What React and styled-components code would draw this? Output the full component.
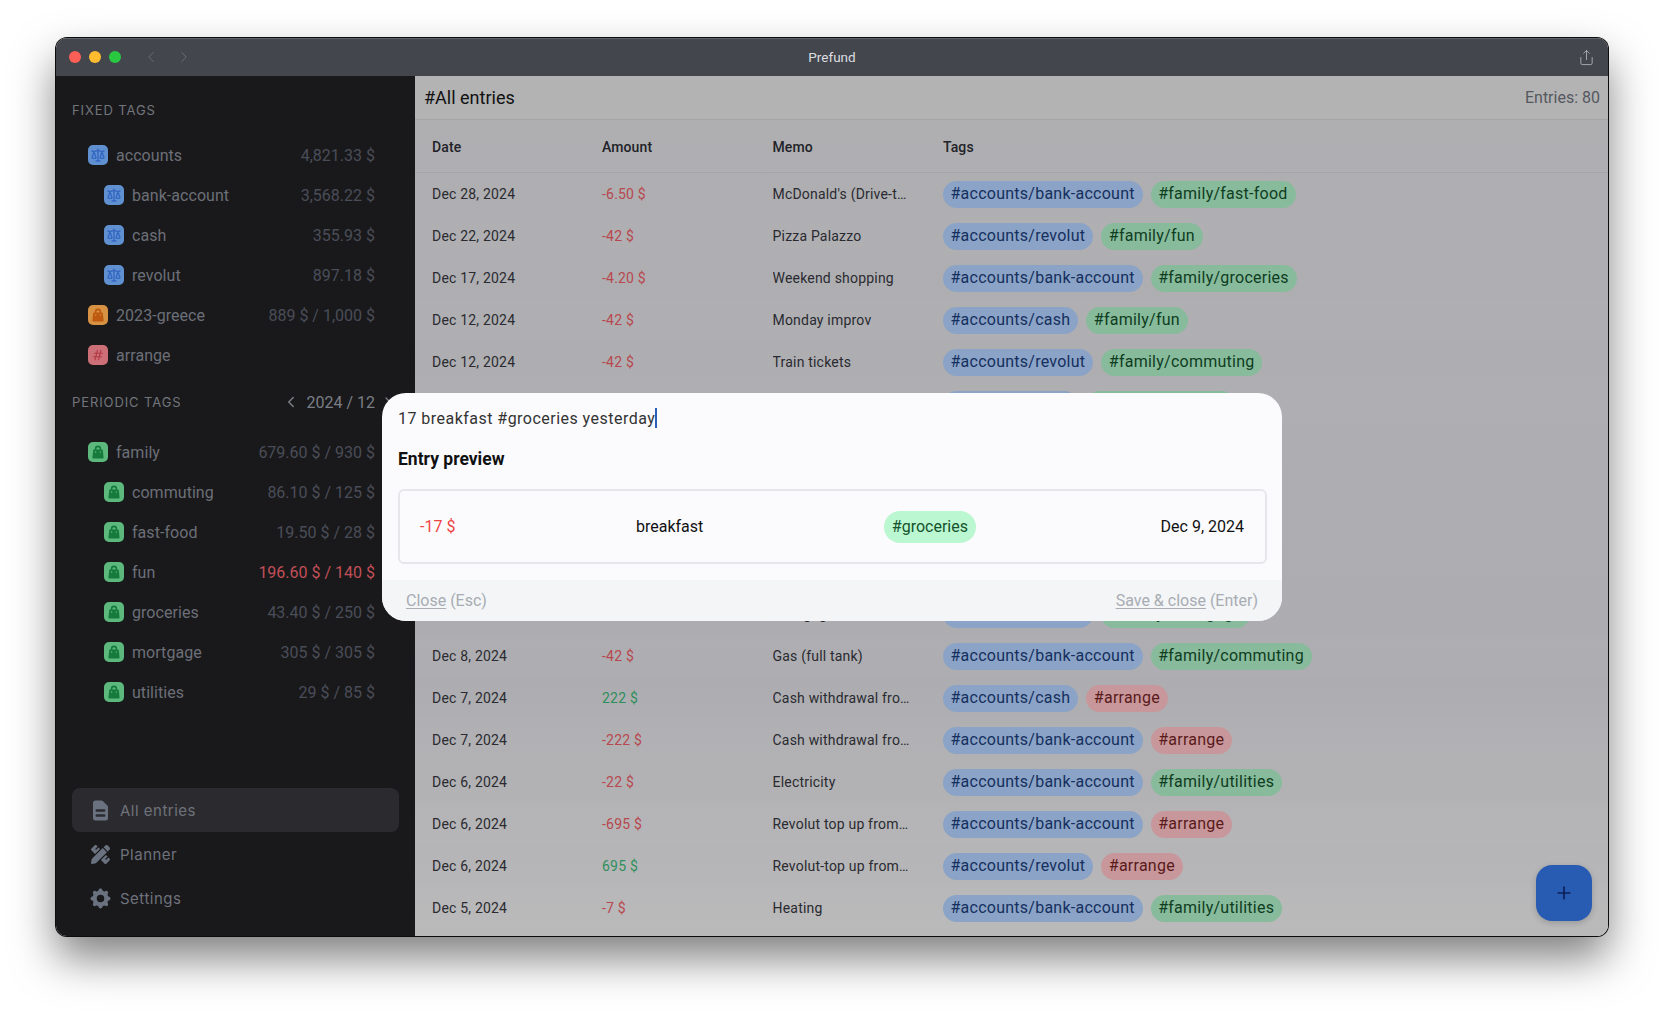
import React from "react";
import styled, { createGlobalStyle } from "styled-components";
import { ChevronLeft, ChevronRight, Plus, Share } from "lucide-react";
import { HiCog, HiDocumentText, HiOutlineHashtag, HiOutlineScale, HiShoppingBag } from "react-icons/hi";
import { FaPencilRuler } from "react-icons/fa";

const GlobalStyle = createGlobalStyle`
  html, body {
    margin: 0;
    height: 100%;
    background: #fff;
    overflow: hidden;
    font-family: "Roboto", "Liberation Sans", sans-serif;
  }
`;

const Page = styled.div`
  width: 1664px;
  height: 1011px;
  padding: 38px 0 0 56px;
  box-sizing: border-box;
`;
const Window = styled.div`
  width: 1552px;
  height: 898px;
  border-radius: 11px;
  overflow: hidden;
  display: flex;
  flex-direction: column;
  box-shadow: 0 0 0 1px #0c0c0e, 0 22px 44px rgba(0, 0, 0, 0.5);
`;
const TitleBar = styled.div`
  position: relative;
  flex: 0 0 38px;
  display: flex;
  align-items: center;
  padding: 0 13px;
  background: #43464d;
  box-shadow: inset 0 1px 0 #62646b;
`;
const Light = styled.span`
  width: 12px;
  height: 12px;
  border-radius: 50%;
  margin-right: 8px;
  background: ${(props) => props.color};
`;
const BackForward = styled.div`
  display: flex;
  gap: 15px;
  margin-left: 13px;
  color: #6b6e75;
`;
const Title = styled.div`
  position: absolute;
  left: 0;
  right: 0;
  text-align: center;
  font-size: 13.5px;
  color: #dcdde0;
`;
const ShareButton = styled.div`
  margin-left: auto;
  display: flex;
  color: #b0b2b7;
`;
const Body = styled.div`
  position: relative;
  flex: 1;
  display: flex;
  min-height: 0;
`;
const Sidebar = styled.aside`
  flex: 0 0 359px;
  box-sizing: border-box;
  display: flex;
  flex-direction: column;
  padding: 24px 0 16px 16px;
  background: #19191b;
`;
const SectionHead = styled.div`
  display: flex;
  align-items: center;
  justify-content: space-between;
  height: 20px;
  padding-right: 40px;
  margin-top: ${(props) => props.$top || 0}px;
`;
const SectionLabel = styled.span`
  font-family: "Inter", sans-serif;
  font-size: 13px;
  letter-spacing: 0.9px;
  color: #72757c;
`;
const Period = styled.div`
  display: flex;
  align-items: center;
  gap: 7px;
  margin-right: -21px;
  font-size: 16px;
  color: #7b7e85;
`;
const PeriodNext = styled.span`
  display: flex;
  margin-left: -2px;
`;
const TagList = styled.div`
  margin-top: ${(props) => props.$top}px;
`;
const TagRow = styled.div`
  display: flex;
  align-items: center;
  height: 40px;
  padding-left: ${(props) => (props.$nested ? 32 : 16)}px;
  padding-right: 40px;
`;
const TagTile = styled.span`
  flex: 0 0 20px;
  height: 20px;
  border-radius: 5px;
  display: flex;
  align-items: center;
  justify-content: center;
  background: ${(props) => props.$bg};
  color: ${(props) => props.$fg};
  margin-right: 8px;
`;
const TagName = styled.span`
  font-size: 16px;
  letter-spacing: 0.05px;
  color: #6c6f78;
`;
const TagAmount = styled.span`
  margin-left: auto;
  font-size: 16px;
  color: ${(props) => (props.$over ? "#c24f58" : "#4a4d58")};
`;
const Nav = styled.nav`
  margin-top: auto;
  margin-right: 16px;
`;
const NavItem = styled.div`
  display: flex;
  align-items: center;
  gap: 10px;
  height: 44px;
  padding-left: 18px;
  border-radius: 8px;
  font-family: "Inter", sans-serif;
  font-size: 15px;
  letter-spacing: 0.5px;
  color: #6f727b;
  background: ${(props) => (props.$active ? "#2b2b2f" : "transparent")};
`;
const NavIcon = styled.span`
  flex: 0 0 20px;
  min-width: 0;
  width: 20px;
  height: 24px;
  display: flex;
  align-items: center;
  justify-content: center;
  color: #6a7280;
  svg {
    flex-shrink: 0;
  }
`;
const Main = styled.main`
  position: relative;
  flex: 1;
  min-width: 0;
  display: flex;
  flex-direction: column;
  background: linear-gradient(#afafb2, #adadb1 70%, #b9b9ba);
`;
const MainHead = styled.div`
  flex: 0 0 44px;
  box-sizing: border-box;
  display: flex;
  align-items: center;
  justify-content: space-between;
  padding: 0 8px 0 9px;
  background: #b3b3b3;
  border-bottom: 1px solid #a4a4a9;
`;
const MainTitle = styled.h1`
  margin: 0;
  font-size: 18px;
  font-weight: 400;
  color: #111;
`;
const EntryCount = styled.span`
  font-size: 16px;
  color: #555860;
`;
const columns = `
  display: grid;
  grid-template-columns: 170px 170.5px 170.5px 1fr;
  align-items: center;
  padding-left: 17px;
`;
const TableHead = styled.div`
  ${columns}
  flex: 0 0 53px;
  box-sizing: border-box;
  padding-top: 2px;
  border-bottom: 1px solid #a4a4a9;
  font-size: 14px;
  font-weight: 500;
  letter-spacing: 0.1px;
  color: #222228;
`;
const Row = styled.div`
  ${columns}
  flex: 0 0 42px;
  font-size: 14px;
  letter-spacing: 0.2px;
  color: #2a2a30;
  background: ${(props) => (props.$odd ? "rgba(255, 255, 255, 0.02)" : "transparent")};
`;
const HiddenRows = styled.div`
  flex: 0 0 168px;
`;
const Amount = styled.span`
  color: ${(props) => (props.$in ? "#2f8f5b" : "#b8474e")};
`;
const Memo = styled.span`
  max-width: 138.5px;
  overflow: hidden;
  white-space: nowrap;
  text-overflow: ellipsis;
`;
const Tags = styled.div`
  display: flex;
  gap: 8px;
`;
const tagColors = {
  blue: "background: #8ba3c6; color: #15305e;",
  green: "background: #87bb9b; color: #0f3d22;",
  red: "background: #c8979b; color: #5a1a1a;",
};
const Pill = styled.span`
  display: inline-flex;
  align-items: center;
  box-sizing: border-box;
  height: 27px;
  padding: 0 8px 1px 7.5px;
  border-radius: 13.5px;
  font-size: 16px;
  letter-spacing: 0.25px;
  ${(props) => tagColors[props.$color]}
`;
const Fab = styled.div`
  position: absolute;
  right: 16px;
  bottom: 15px;
  width: 56px;
  height: 56px;
  border-radius: 16px;
  display: flex;
  align-items: center;
  justify-content: center;
  background: #285cb3;
  color: #0c1f5a;
  box-shadow: 0 2px 6px rgba(0, 0, 0, 0.18);
`;
const Modal = styled.div`
  position: absolute;
  left: 326px;
  top: 317px;
  width: 900px;
  height: 228px;
  border-radius: 24px;
  overflow: hidden;
  display: flex;
  flex-direction: column;
  background: #fbfbfe;
`;
const ModalContent = styled.div`
  flex: 1;
  padding: 15px 15px 0 16px;
`;
const InputLine = styled.div`
  display: flex;
  align-items: center;
  height: 20px;
  font-size: 16px;
  letter-spacing: 0.47px;
  color: #333;
`;
const Caret = styled.span`
  width: 2px;
  height: 20px;
  background: #2c5fb8;
`;
const PreviewTitle = styled.h2`
  margin: 21px 0 0;
  font-size: 17.5px;
  line-height: 20px;
  font-weight: 700;
  color: #111;
`;
const PreviewBox = styled.div`
  box-sizing: border-box;
  height: 75px;
  margin-top: 20px;
  padding: 0 21px 0 20px;
  display: flex;
  align-items: center;
  justify-content: space-between;
  border: 2px solid #e5e7eb;
  border-radius: 6px;
  font-size: 16px;
  color: #111;
`;
const PreviewAmount = styled.span`
  color: #ef4444;
`;
const PreviewPill = styled.span`
  display: inline-flex;
  align-items: center;
  height: 32px;
  padding: 0 8px;
  margin-right: 4px;
  border-radius: 16px;
  background: #bbf7d0;
  color: #14532d;
`;
const ModalFooter = styled.div`
  flex: 0 0 41px;
  display: flex;
  align-items: center;
  justify-content: space-between;
  padding: 0 24px;
  background: #f3f5f7;
  font-size: 16px;
  color: #a8acb3;
`;
const Key = styled.span`
  u {
    text-underline-offset: 2px;
  }
`;

const fixedTags = [
  { name: "accounts", amount: "4,821.33 $", type: "scale" },
  { name: "bank-account", amount: "3,568.22 $", type: "scale", nested: true },
  { name: "cash", amount: "355.93 $", type: "scale", nested: true },
  { name: "revolut", amount: "897.18 $", type: "scale", nested: true },
  { name: "2023-greece", amount: "889 $ / 1,000 $", type: "orange" },
  { name: "arrange", amount: "", type: "hash" },
];
const periodicTags = [
  { name: "family", amount: "679.60 $ / 930 $", type: "bag" },
  { name: "commuting", amount: "86.10 $ / 125 $", type: "bag", nested: true },
  { name: "fast-food", amount: "19.50 $ / 28 $", type: "bag", nested: true },
  { name: "fun", amount: "196.60 $ / 140 $", type: "bag", nested: true, over: true },
  { name: "groceries", amount: "43.40 $ / 250 $", type: "bag", nested: true },
  { name: "mortgage", amount: "305 $ / 305 $", type: "bag", nested: true },
  { name: "utilities", amount: "29 $ / 85 $", type: "bag", nested: true },
];
const tiles = {
  scale: { bg: "#6090d0", fg: "#3367c4", Icon: HiOutlineScale },
  orange: { bg: "#d79142", fg: "#bd5a10", Icon: HiShoppingBag },
  hash: { bg: "#cc6f76", fg: "#b23a46", Icon: HiOutlineHashtag },
  bag: { bg: "#5cb87c", fg: "#167a3c", Icon: HiShoppingBag },
};

const topEntries = [
  ["Dec 28, 2024", "-6.50 $", "McDonald's (Drive-through)", "#accounts/bank-account", "#family/fast-food", "green"],
  ["Dec 22, 2024", "-42 $", "Pizza Palazzo", "#accounts/revolut", "#family/fun", "green"],
  ["Dec 17, 2024", "-4.20 $", "Weekend shopping", "#accounts/bank-account", "#family/groceries", "green"],
  ["Dec 12, 2024", "-42 $", "Monday improv", "#accounts/cash", "#family/fun", "green"],
  ["Dec 12, 2024", "-42 $", "Train tickets", "#accounts/revolut", "#family/commuting", "green"],
  ["", "", "", "#accounts/cash", "#family/mortgage", "green"],
];
const bottomEntries = [
  ["", "", "Mortgage", "#accounts/revolut", "#family/mortgage", "green"],
  ["Dec 8, 2024", "-42 $", "Gas (full tank)", "#accounts/bank-account", "#family/commuting", "green"],
  ["Dec 7, 2024", "222 $", "Cash withdrawal from ATM", "#accounts/cash", "#arrange", "red"],
  ["Dec 7, 2024", "-222 $", "Cash withdrawal from ATM", "#accounts/bank-account", "#arrange", "red"],
  ["Dec 6, 2024", "-22 $", "Electricity", "#accounts/bank-account", "#family/utilities", "green"],
  ["Dec 6, 2024", "-695 $", "Revolut top up from bank", "#accounts/bank-account", "#arrange", "red"],
  ["Dec 6, 2024", "695 $", "Revolut-top up from bank", "#accounts/revolut", "#arrange", "red"],
  ["Dec 5, 2024", "-7 $", "Heating", "#accounts/bank-account", "#family/utilities", "green"],
];

const SidebarTag = ({ tag }) => {
  const { bg, fg, Icon } = tiles[tag.type];
  return (
    <TagRow $nested={tag.nested}>
      <TagTile $bg={bg} $fg={fg}>
        <Icon size={tag.type === "hash" ? 14 : 16} />
      </TagTile>
      <TagName>{tag.name}</TagName>
      <TagAmount $over={tag.over}>{tag.amount}</TagAmount>
    </TagRow>
  );
};

const EntryRow = ({ entry, odd }) => (
  <Row $odd={odd}>
    <span>{entry[0]}</span>
    <Amount $in={!entry[1].startsWith("-")}>{entry[1]}</Amount>
    <Memo>{entry[2]}</Memo>
    <Tags>
      <Pill $color="blue">{entry[3]}</Pill>
      <Pill $color={entry[5]}>{entry[4]}</Pill>
    </Tags>
  </Row>
);

export default function App() {
  return (
    <Page>
      <GlobalStyle />
      <Window>
        <TitleBar>
          <Light color="#ff5f57" />
          <Light color="#febc2e" />
          <Light color="#28c840" />
          <BackForward>
            <ChevronLeft size={18} strokeWidth={1.25} />
            <ChevronRight size={18} strokeWidth={1.25} />
          </BackForward>
          <Title>Prefund</Title>
          <ShareButton>
            <Share size={17} strokeWidth={1.25} />
          </ShareButton>
        </TitleBar>
        <Body>
          <Sidebar>
            <SectionHead>
              <SectionLabel>FIXED TAGS</SectionLabel>
            </SectionHead>
            <TagList $top={15}>
              {fixedTags.map((tag) => (
                <SidebarTag key={tag.name} tag={tag} />
              ))}
            </TagList>
            <SectionHead $top={17}>
              <SectionLabel>PERIODIC TAGS</SectionLabel>
              <Period>
                <ChevronLeft size={18} strokeWidth={2} />
                2024 / 12
                <PeriodNext>
                  <ChevronRight size={16} strokeWidth={2} />
                </PeriodNext>
              </Period>
            </SectionHead>
            <TagList $top={20}>
              {periodicTags.map((tag) => (
                <SidebarTag key={tag.name} tag={tag} />
              ))}
            </TagList>
            <Nav>
              <NavItem $active>
                <NavIcon>
                  <HiDocumentText size={25} />
                </NavIcon>
                All entries
              </NavItem>
              <NavItem>
                <NavIcon>
                  <FaPencilRuler size={19} />
                </NavIcon>
                Planner
              </NavItem>
              <NavItem>
                <NavIcon>
                  <HiCog size={25} />
                </NavIcon>
                Settings
              </NavItem>
            </Nav>
          </Sidebar>
          <Main>
            <MainHead>
              <MainTitle>#All entries</MainTitle>
              <EntryCount>Entries: 80</EntryCount>
            </MainHead>
            <TableHead>
              <span>Date</span>
              <span>Amount</span>
              <span>Memo</span>
              <span>Tags</span>
            </TableHead>
            {topEntries.map((entry, index) => (
              <EntryRow key={index} entry={entry} odd={index % 2 === 1} />
            ))}
            <HiddenRows />
            {bottomEntries.map((entry, index) => (
              <EntryRow key={index} entry={entry} odd={index % 2 === 1} />
            ))}
            <Fab>
              <Plus size={20} strokeWidth={2} />
            </Fab>
          </Main>
          <Modal>
            <ModalContent>
              <InputLine>
                17 breakfast #groceries yesterday
                <Caret />
              </InputLine>
              <PreviewTitle>Entry preview</PreviewTitle>
              <PreviewBox>
                <PreviewAmount>-17 $</PreviewAmount>
                <span>breakfast</span>
                <PreviewPill>#groceries</PreviewPill>
                <span>Dec 9, 2024</span>
              </PreviewBox>
            </ModalContent>
            <ModalFooter>
              <Key>
                <u>Close</u> (Esc)
              </Key>
              <Key>
                <u>Save &amp; close</u> (Enter)
              </Key>
            </ModalFooter>
          </Modal>
        </Body>
      </Window>
    </Page>
  );
}
